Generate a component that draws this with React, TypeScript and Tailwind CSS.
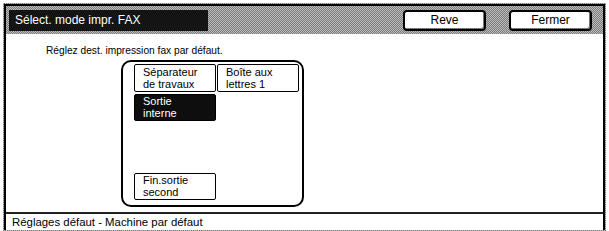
export default function App() {
  const dither = "bg-[repeating-conic-gradient(#7a7a7a_0_25%,#bdbdbd_0_50%)] bg-[length:2px_2px]";
  return (
    <div className="w-[609px] h-[231px] bg-white relative overflow-hidden font-['Liberation_Sans',Arial,sans-serif] text-black">
      <div className={`absolute left-[3px] top-[3px] w-[603px] h-[228px] ${dither}`} />
      <div className="absolute left-[4px] top-[4px] w-[601px] h-[226px] border-l-2 border-t-2 border-r-2 border-black bg-white flex flex-col">
        <div className={`h-[28px] flex items-center px-[3px] ${dither}`}>
          <div className="w-[199px] h-[21px] bg-[#141414] text-white text-[12px] leading-[21px] pl-[6px]">
            Sélect. mode impr. FAX
          </div>
          <div className="flex-1" />
          <button className="w-[83px] h-[21px] rounded-[4px] border-2 border-black bg-white text-[12px] leading-[17px] shadow-[inset_-1px_-1px_0_#777]">
            Reve
          </button>
          <div className="w-[23px]" />
          <button className="w-[83px] h-[21px] rounded-[4px] border-2 border-black bg-white text-[12px] leading-[17px] shadow-[inset_-1px_-1px_0_#777]">
            Fermer
          </button>
          <div className="w-[8px]" />
        </div>
        <div className="h-[178px] bg-white">
          <div className="pl-[40px] pt-[10px] text-[10.2px] leading-[13px]">Réglez dest. impression fax par défaut.</div>
          <div className="ml-[115px] mt-[3px] w-[183px] h-[147px] border-2 border-black rounded-[10px] pl-[11px] pt-[2px]">
            <div className="grid grid-cols-[82px_82px] gap-x-[1px] gap-y-[2px] text-[11px] leading-[12px]">
              <div className="h-[28px] border border-black bg-white rounded-[2px] pl-[8px] pt-[1px]">Séparateur<br />de travaux</div>
              <div className="h-[28px] border border-black bg-white rounded-[2px] pl-[8px] pt-[1px]">Boîte aux<br />lettres 1</div>
              <div className="h-[27px] border border-black bg-[#0e0e0e] text-white rounded-[2px] pl-[8px] pt-[0px]">Sortie<br />interne</div>
              <div />
            </div>
            <div className="mt-[52px] w-[82px] h-[27px] border border-black bg-white rounded-[2px] pl-[8px] pt-[0px] text-[11px] leading-[12px]">
              Fin.sortie<br />second
            </div>
          </div>
        </div>
        <div className="h-[2px] bg-[#222]" />
        <div className="h-[16px] pl-[6px] text-[11.4px] leading-[16px] bg-white">Réglages défaut - Machine par défaut</div>
        <div className={`flex-1 ${dither}`} />
      </div>
    </div>
  );
}
